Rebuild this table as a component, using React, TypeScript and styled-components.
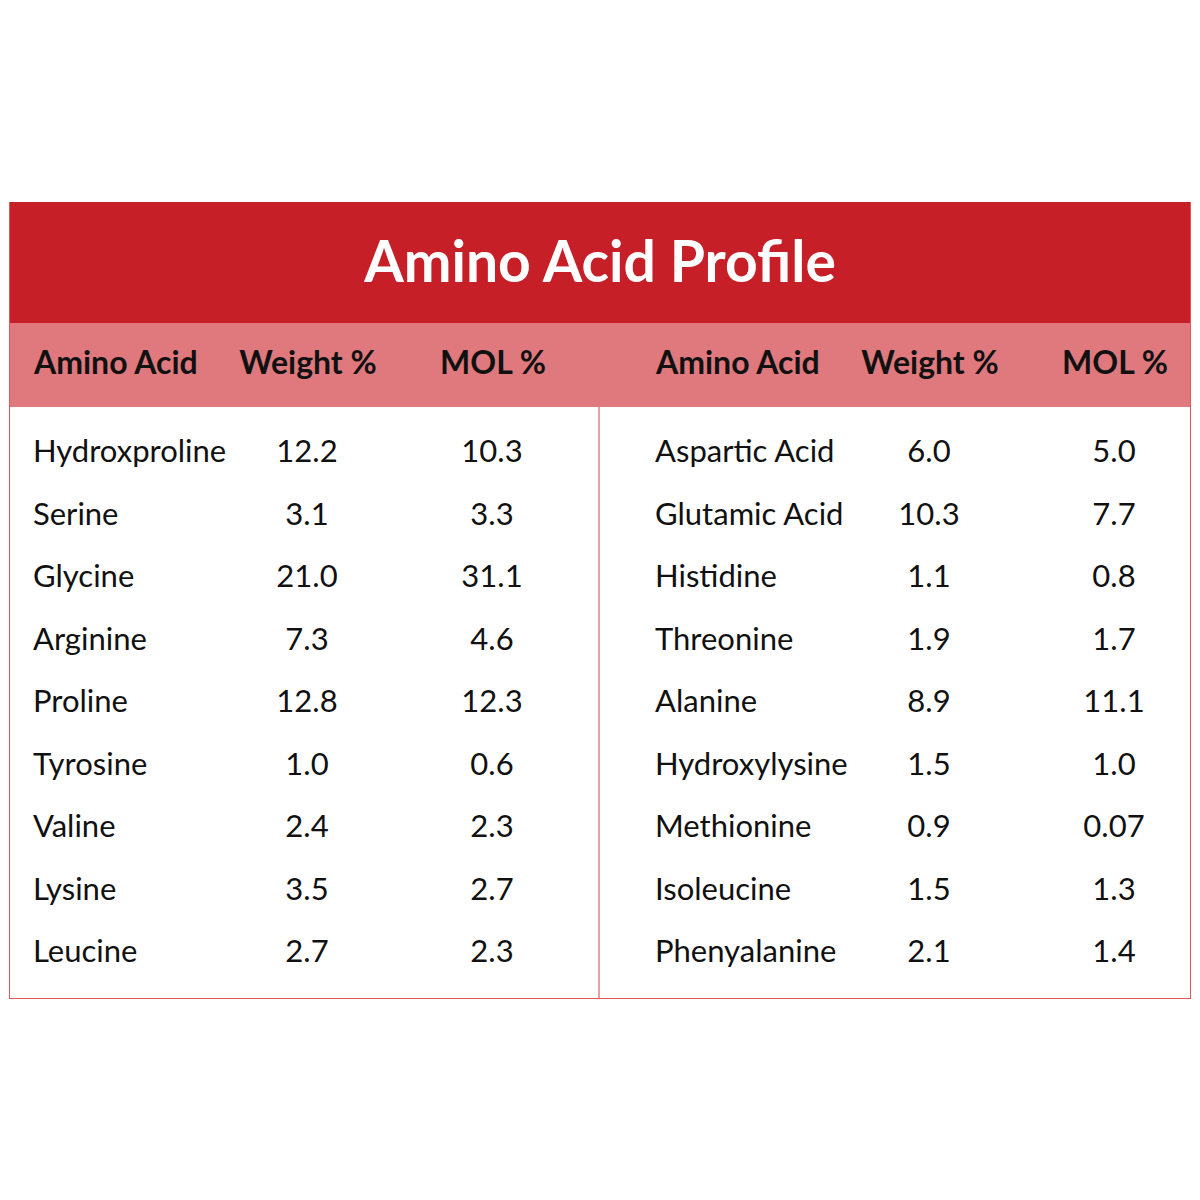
import React from "react";
import styled, { createGlobalStyle } from "styled-components";

const GlobalStyle = createGlobalStyle`
  html, body {
    margin: 0;
    padding: 0;
    background: #ffffff;
  }
  body {
    font-family: "Lato", "Noto Sans", sans-serif;
    color: #111111;
  }
`;

const Page = styled.div`
  width: 1200px;
  height: 1200px;
  padding-top: 202px;
  padding-left: 9px;
  box-sizing: border-box;
`;

const Table = styled.div`
  width: 1182px;
  border: 1px solid #e2565c;
  border-top: none;
  box-sizing: border-box;
`;

const Title = styled.h1`
  margin: 0;
  height: 121px;
  background: #c61f28;
  color: #ffffff;
  font-size: 57px;
  font-weight: 700;
  display: flex;
  align-items: center;
  justify-content: center;
  padding-bottom: 6px;
  box-sizing: border-box;
`;

const HeaderBand = styled.div`
  height: 84px;
  background: #df797d;
  display: grid;
  grid-template-columns: 590px 1fr;
`;

const Body = styled.div`
  display: grid;
  grid-template-columns: 590px 1fr;
`;

/* name | weight (centred) | mol (centred, after a 40px lead) */
const columns = `
  display: grid;
  grid-template-columns: 194px 160px 170px;
`;

const HeadRow = styled.div<{ $right?: boolean }>`
  ${columns}
  align-items: center;
  padding-left: ${(p) => (p.$right ? "56px" : "24px")};
  padding-bottom: 7px;
`;

const HeadCell = styled.div<{ $center?: boolean; $lead?: boolean }>`
  font-size: 32px;
  font-weight: 700;
  white-space: nowrap;
  text-align: ${(p) => (p.$center ? "center" : "left")};
  padding-left: ${(p) => (p.$lead ? "40px" : "0")};
`;

const Rows = styled.div<{ $right?: boolean; $divider?: boolean }>`
  ${columns}
  grid-auto-rows: 62.5px;
  align-items: center;
  padding: 12px 0 16px ${(p) => (p.$right ? "55px" : "23px")};
  ${(p) => (p.$divider ? "border-right: 2px solid #e3a2a6;" : "")}
`;

const Cell = styled.div<{ $center?: boolean; $lead?: boolean }>`
  font-size: 31px;
  white-space: nowrap;
  text-align: ${(p) => (p.$center ? "center" : "left")};
  padding-left: ${(p) => (p.$lead ? "40px" : "0")};
`;

type Row = [string, string, string];

const left: Row[] = [
  ["Hydroxproline", "12.2", "10.3"],
  ["Serine", "3.1", "3.3"],
  ["Glycine", "21.0", "31.1"],
  ["Arginine", "7.3", "4.6"],
  ["Proline", "12.8", "12.3"],
  ["Tyrosine", "1.0", "0.6"],
  ["Valine", "2.4", "2.3"],
  ["Lysine", "3.5", "2.7"],
  ["Leucine", "2.7", "2.3"],
];

const right: Row[] = [
  ["Aspartic Acid", "6.0", "5.0"],
  ["Glutamic Acid", "10.3", "7.7"],
  ["Histidine", "1.1", "0.8"],
  ["Threonine", "1.9", "1.7"],
  ["Alanine", "8.9", "11.1"],
  ["Hydroxylysine", "1.5", "1.0"],
  ["Methionine", "0.9", "0.07"],
  ["Isoleucine", "1.5", "1.3"],
  ["Phenyalanine", "2.1", "1.4"],
];

const Headers = ({ right }: { right?: boolean }) => (
  <HeadRow $right={right}>
    <HeadCell>Amino Acid</HeadCell>
    <HeadCell $center>Weight %</HeadCell>
    <HeadCell $center $lead>
      MOL %
    </HeadCell>
  </HeadRow>
);

const renderRows = (rows: Row[]) =>
  rows.map((r) => (
    <React.Fragment key={r[0]}>
      <Cell>{r[0]}</Cell>
      <Cell $center>{r[1]}</Cell>
      <Cell $center $lead>
        {r[2]}
      </Cell>
    </React.Fragment>
  ));

export default function App() {
  return (
    <Page>
      <GlobalStyle />
      <Table>
        <Title>Amino Acid Profile</Title>
        <HeaderBand>
          <Headers />
          <Headers right />
        </HeaderBand>
        <Body>
          <Rows $divider>{renderRows(left)}</Rows>
          <Rows $right>{renderRows(right)}</Rows>
        </Body>
      </Table>
    </Page>
  );
}
